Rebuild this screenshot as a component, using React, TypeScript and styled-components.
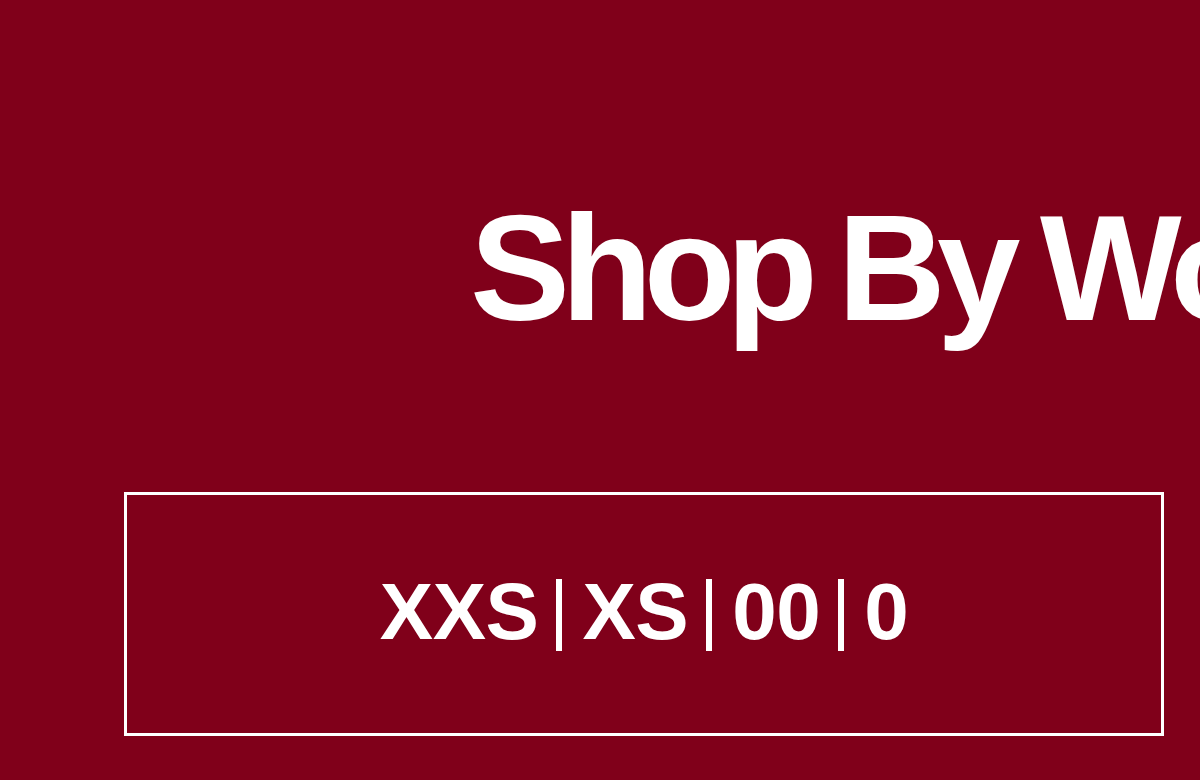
import styled, { createGlobalStyle } from "styled-components";

const GlobalStyle = createGlobalStyle`
  html, body {
    margin: 0;
    padding: 0;
    background: #80001a;
  }
  body {
    font-family: "Liberation Sans", Arial, sans-serif;
    color: #ffffff;
  }
`;

const Section = styled.section`
  width: 1200px;
  height: 780px;
  overflow: hidden;
  display: flex;
  flex-direction: column;
  padding: 193px 0 0 124px;
  box-sizing: border-box;
`;

const Title = styled.h1`
  margin: 0 0 0 346px;
  font-size: 150px;
  line-height: 150px;
  font-weight: 700;
  letter-spacing: -9px;
  word-spacing: -4px;
  white-space: nowrap;
`;

const SizeBox = styled.a`
  margin-top: 149px;
  width: 1040px;
  height: 244px;
  box-sizing: border-box;
  border: 3px solid #ffffff;
  display: flex;
  align-items: center;
  justify-content: center;
  color: #ffffff;
  text-decoration: none;
  font-size: 80px;
  font-weight: 700;
  letter-spacing: -0.5px;
  padding-bottom: 4px;
`;

const Divider = styled.span`
  display: inline-block;
  width: 6px;
  height: 72px;
  background: #ffffff;
  margin: 0 20px 0 18px;
  transform: translateY(12px);
`;

const sizes = ["XXS", "XS", "00", "0"];

export default function App() {
  return (
    <>
      <GlobalStyle />
      <Section>
        <Title>Shop By Women's Size</Title>
        <SizeBox href="#">
          {sizes.map((s, i) => (
            <span key={s}>
              {i > 0 && <Divider />}
              {s}
            </span>
          ))}
        </SizeBox>
      </Section>
    </>
  );
}
